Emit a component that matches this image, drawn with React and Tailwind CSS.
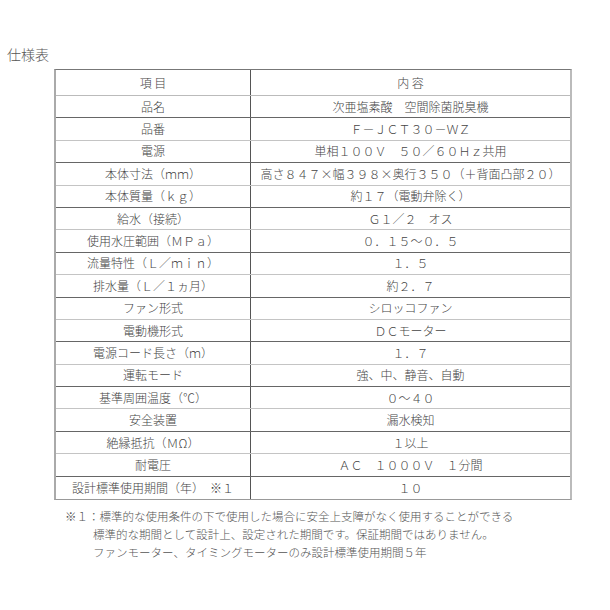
const rows = [
  ["品名", "次亜塩素酸　空間除菌脱臭機"],
  ["品番", "Ｆ－ＪＣＴ３０－ＷＺ"],
  ["電源", "単相１００Ｖ　５０／６０Ｈｚ共用"],
  ["本体寸法（ｍｍ）", "高さ８４７×幅３９８×奥行３５０（＋背面凸部２０）"],
  ["本体質量（ｋｇ）", "約１７（電動弁除く）"],
  ["給水（接続）", "Ｇ１／２　オス"],
  ["使用水圧範囲（ＭＰａ）", "０．１５～０．５"],
  ["流量特性（Ｌ／ｍｉｎ）", "１．５"],
  ["排水量（Ｌ／１ヵ月）", "約２．７"],
  ["ファン形式", "シロッコファン"],
  ["電動機形式", "ＤＣモーター"],
  ["電源コード長さ（ｍ）", "１．７"],
  ["運転モード", "強、中、静音、自動"],
  ["基準周囲温度（℃）", "０～４０"],
  ["安全装置", "漏水検知"],
  ["絶縁抵抗（ＭΩ）", "１以上"],
  ["耐電圧", "ＡＣ　１０００Ｖ　１分間"],
  ["設計標準使用期間（年）　※１", "１０"],
];

export default function App() {
  return (
    <div
      className="w-[610px] h-[610px] bg-white text-[#444] pt-[45px]"
      style={{ fontFamily: '"Noto Sans CJK JP", "Noto Sans", sans-serif' }}
    >
      {/* タイトル */}
      <h1 className="ml-[7px] text-[14px] leading-[18px] font-light text-[#555]">仕様表</h1>

      {/* 仕様テーブル */}
      <div className="ml-[54px] mt-[6px] w-[518px] border-l-2 border-r-2 border-l-[#aaa] border-r-[#bbb] border-t border-t-[#777] border-b border-b-[#999] text-[12px] font-light">
        <div className="flex h-[26px] border-b border-[#bbb]">
          <div className="w-[195px] border-r border-[#555] flex items-center justify-center">項 目</div>
          <div className="flex-1 flex items-center justify-center">内 容</div>
        </div>
        {rows.map(([label, value], i) => (
          <div
            key={label}
            className={
              i === rows.length - 1
                ? "flex h-[22px]"
                : i % 2 === 0
                ? "flex h-[22.4px] border-b border-[#666]"
                : "flex h-[22.4px] border-b border-[#c4c4c4]"
            }
          >
            <div className="w-[195px] border-r border-[#555] flex items-center justify-center whitespace-nowrap">
              {label}
            </div>
            <div className="flex-1 flex items-center justify-center whitespace-nowrap">{value}</div>
          </div>
        ))}
      </div>

      {/* 注記 */}
      <div className="mt-[7px] text-[11.5px] leading-[18px] font-light text-[#555]">
        <div className="ml-[65px]">※１：標準的な使用条件の下で使用した場合に安全上支障がなく使用することができる</div>
        <div className="ml-[93px]">標準的な期間として設計上、設定された期間です。保証期間ではありません。</div>
        <div className="ml-[93px]">ファンモーター、タイミングモーターのみ設計標準使用期間５年</div>
      </div>
    </div>
  );
}
